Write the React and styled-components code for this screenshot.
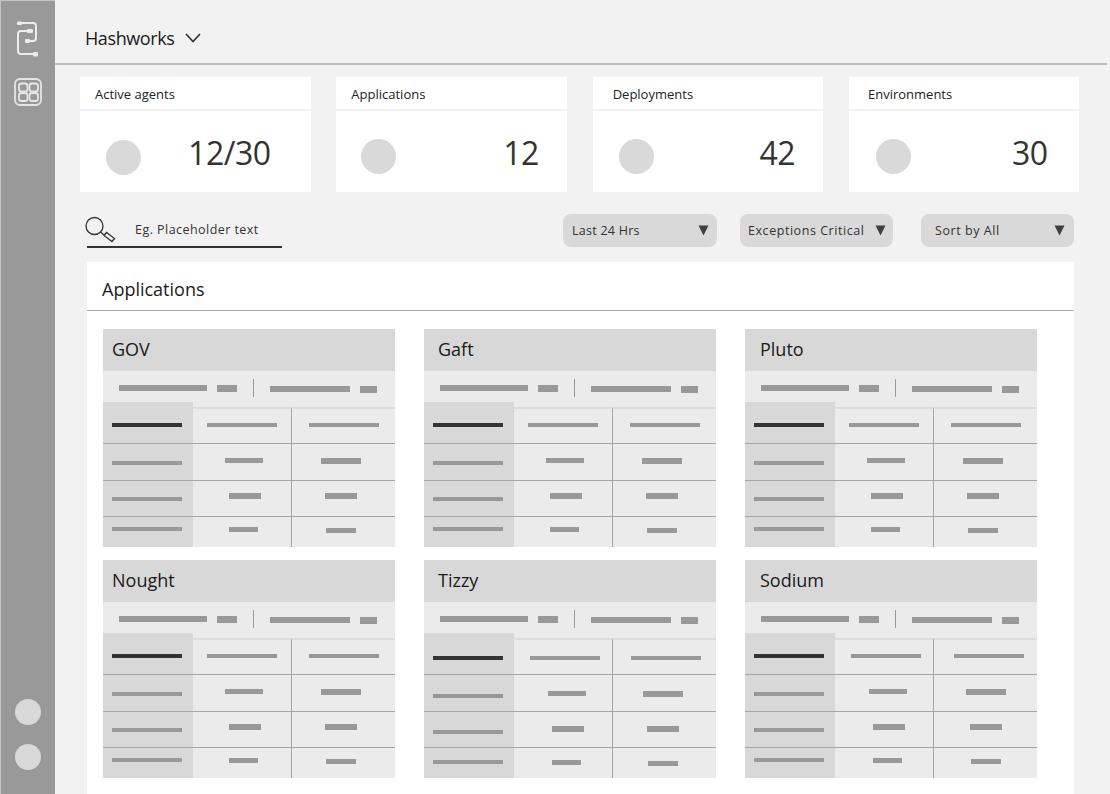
import React from 'react'
import styled, { createGlobalStyle } from 'styled-components'

const GlobalStyle = createGlobalStyle`
  html, body {
    margin: 0;
    height: 794px;
    overflow: hidden;
    background: #f2f2f2;
    font-family: "Open Sans", "Liberation Sans", sans-serif;
  }
  * { box-sizing: border-box; }
`

const Page = styled.div`
  display: flex;
  width: 1110px;
  height: 794px;
  overflow: hidden;
`

const Sidebar = styled.aside`
  width: 55px;
  flex-shrink: 0;
  background: #999;
  border-left: 1px solid #c4c4c4;
  border-top: 1px solid #c4c4c4;
  display: flex;
  flex-direction: column;
  align-items: center;
  padding: 18px 0 24px;
`

const NavIcon = styled.svg`
  display: block;
  margin-bottom: ${({ gap }) => gap || 0}px;
`

const Spacer = styled.div`
  flex: 1;
`

const SideDot = styled.div`
  width: 26px;
  height: 26px;
  border-radius: 50%;
  background: #d9d9d9;
  margin-top: ${({ top }) => top || 0}px;
`

const Main = styled.main`
  flex: 1;
  min-width: 0;
  display: flex;
  flex-direction: column;
`

const Header = styled.header`
  height: 65px;
  width: 1052px;
  flex-shrink: 0;
  border-bottom: 2px solid #bdbdbd;
  display: flex;
  align-items: center;
  gap: 11px;
  padding: 13px 0 0 30px;
  font-size: 18px;
  letter-spacing: -0.4px;
  color: #1a1a1a;
`

const StatRow = styled.section`
  display: flex;
  gap: 25.83px;
  padding: 12px 0 0 25px;
`

const StatCard = styled.div`
  width: 230.5px;
  height: 115px;
  background: #fff;
`

const StatTitle = styled.div`
  height: 34px;
  border-bottom: 2px solid #f2f2f2;
  padding: 1px 0 0 ${({ indent }) => indent}px;
  display: flex;
  align-items: center;
  font-size: 13px;
  color: #222;
`

const StatBody = styled.div`
  height: 81px;
  display: flex;
  align-items: center;
  justify-content: space-between;
  padding: 0 ${({ end }) => end}px 0 ${({ indent }) => indent}px;
`

const StatDot = styled.div`
  width: 35px;
  height: 35px;
  border-radius: 50%;
  background: #d9d9d9;
  margin-top: ${({ drop }) => drop}px;
`

const StatValue = styled.div`
  font-size: 32px;
  letter-spacing: -0.5px;
  line-height: 40px;
  color: #333;
  margin-top: 3px;
`

const FilterRow = styled.section`
  display: flex;
  align-items: flex-start;
  height: 70px;
  padding: 22px 0 0 32px;
`

const SearchBox = styled.div`
  width: 195px;
  height: 34px;
  border-bottom: 2px solid #333;
  display: flex;
  align-items: flex-start;
  gap: 19px;
  margin-right: 281px;
`

const SearchGlyph = styled.svg`
  display: block;
  margin: 2px 0 0 -2px;
`

const SearchText = styled.span`
  font-size: 12.5px;
  letter-spacing: 0.45px;
  line-height: 17px;
  color: #333;
  margin-top: 7px;
`

const Select = styled.div`
  width: ${({ w }) => w}px;
  height: 33px;
  margin-right: ${({ after }) => after}px;
  border-radius: 8px;
  background: #d9d9d9;
  display: flex;
  align-items: center;
  justify-content: space-between;
  padding: 0 ${({ end }) => end}px 0 ${({ indent }) => indent}px;
  font-size: 12.5px;
  letter-spacing: ${({ tight }) => (tight ? 0.25 : 0.55)}px;
  color: #333;
`

const Panel = styled.section`
  width: 987px;
  flex: 1;
  margin-left: 32px;
  background: #fff;
`

const PanelTitle = styled.h2`
  margin: 0;
  height: 49px;
  padding: 5px 0 0 15px;
  display: flex;
  align-items: center;
  border-bottom: 1px solid #aaa;
  font-size: 18px;
  font-weight: 400;
  color: #1a1a1a;
`

const AppGrid = styled.div`
  display: grid;
  grid-template-columns: repeat(3, 292px);
  column-gap: 29px;
  row-gap: 13px;
  padding: 18px 0 0 16px;
`

const AppCard = styled.article`
  width: 292px;
  height: 218px;
  background: #ebebeb;
  display: flex;
  flex-direction: column;
`

const CardTitle = styled.h3`
  margin: 0;
  height: 42px;
  background: #d8d8d8;
  padding: 0 0 2px ${({ indent }) => indent}px;
  display: flex;
  align-items: center;
  font-size: 18px;
  font-weight: 400;
  color: #1a1a1a;
`

const Summary = styled.div`
  height: 36px;
  display: flex;
  align-items: center;
  padding: 0 0 2px 16px;
`

const Bar = styled.div`
  width: ${({ w }) => w}px;
  height: ${({ h }) => h || 6}px;
  background: ${({ dark }) => (dark ? '#333' : '#999')};
  margin-left: ${({ before }) => before || 0}px;
  margin-right: ${({ after }) => after || 0}px;
  margin-top: ${({ down }) => down || 0}px;
`

const SummaryDivider = styled.div`
  width: 1px;
  height: 18px;
  background: #999;
  margin: 0 16px;
`

const Table = styled.div`
  flex: 1;
  display: grid;
  grid-template-columns: 90px 98px 104px;
  grid-template-rows: 36px 37px 36px 31px;
`

const Cell = styled.div`
  display: flex;
  align-items: center;
  justify-content: ${({ first }) => (first ? 'flex-start' : 'center')};
  padding-left: ${({ first }) => (first ? 9 : 0)}px;
  background: ${({ first }) => (first ? '#d8d8d8' : 'transparent')};
  border-top: ${({ top, first }) => (top ? (first ? '0' : '2px solid #dcdcdc') : '1px solid #a6a6a6')};
  border-left: ${({ last }) => (last ? '1px solid #a6a6a6' : '0')};
  margin-top: ${({ top, first }) => (top && first ? -5 : 0)}px;
`

const Chevron = () => (
  <svg width="16" height="10" viewBox="0 0 16 10" fill="none" stroke="#333" strokeWidth="1.7">
    <path d="M1 1l7 7.5L15 1" />
  </svg>
)

const Caret = () => (
  <svg width="11" height="11" viewBox="0 0 11 11">
    <path d="M0.5 0.5h10L5.5 10.5z" fill="#404040" />
  </svg>
)

const Logo = () => (
  <NavIcon gap={21} width="24" height="38" viewBox="0 0 24 38" fill="none" stroke="#ececec" strokeWidth="2">
    <path d="M3 4H17q3 0 3 3V19q0 3-3 3H10" />
    <path d="M14 12H5q-3 0-3 3V32q0 3 3 3H20" />
    <rect x="1" y="2.500" width="5" height="3.500" rx="1" fill="#ececec" stroke="none" />
    <rect x="11" y="10" width="6" height="4" rx="1" fill="#ececec" stroke="none" />
    <rect x="9" y="20" width="5" height="4" rx="1" fill="#ececec" stroke="none" />
    <rect x="17" y="33" width="5" height="4.500" rx="1" fill="#ececec" stroke="none" />
  </NavIcon>
)

const GridIcon = () => (
  <NavIcon width="28" height="28" viewBox="0 0 28 28" fill="none" stroke="#e6e6e6" strokeWidth="1.800">
    <rect x="1" y="1" width="26" height="26" rx="5" />
    <rect x="5" y="5.500" width="8.500" height="8" rx="2.500" />
    <rect x="15.500" y="5.500" width="8.500" height="8" rx="2.500" />
    <rect x="5" y="15" width="8.500" height="8" rx="2.500" />
    <rect x="15.500" y="15" width="8.500" height="8" rx="2.500" />
  </NavIcon>
)

const SearchIcon = () => (
  <SearchGlyph width="31" height="27" viewBox="0 0 31 27" fill="none" stroke="#333" strokeWidth="1.300">
    <circle cx="9.500" cy="10" r="8.500" />
    <path d="M15.500 16l3.500 3" />
    <path d="M19 19.500l2.500-3 8 6-2.500 3z" />
  </SearchGlyph>
)

const stats = [
  { title: 'Active agents', value: '12/30', titleIndent: 15, dotIndent: 26, end: 40, drop: 12 },
  { title: 'Applications', value: '12', titleIndent: 15, dotIndent: 25, end: 28, drop: 10 },
  { title: 'Deployments', value: '42', titleIndent: 20, dotIndent: 26, end: 28, drop: 10 },
  { title: 'Environments', value: '30', titleIndent: 19, dotIndent: 27, end: 32, drop: 10 },
]

const apps = [
  { name: 'GOV', indent: 9 },
  { name: 'Gaft', indent: 14 },
  { name: 'Pluto', indent: 15 },
  { name: 'Nought', indent: 9 },
  { name: 'Tizzy', indent: 14, lift: 4, midShift: 4, rightShift: 2 },
  { name: 'Sodium', indent: 15, midShift: 4, rightShift: 6 },
]

// sizes and small offsets of the bars, one entry per table line below the head
const rows = [
  { leftDown: 2, mid: 38, midH: 5, midDown: -3, midBefore: 3, right: 40, rightH: 6, rightDown: -2, rightAfter: 5 },
  { leftDown: 1, mid: 32, midH: 6, midDown: -5, midBefore: 5, right: 32, rightH: 6, rightDown: -5, rightAfter: 5 },
  { leftDown: -6, mid: 29, midH: 5, midDown: -5, midBefore: 2, right: 30, rightH: 5, rightDown: -3, rightAfter: 5 },
]

const AppTile = ({ name, indent, lift = 0, midShift = 0, rightShift = 0 }) => (
  <AppCard>
    <CardTitle indent={indent}>{name}</CardTitle>
    <Summary>
      <Bar w={88} after={10} />
      <Bar w={20} h={7} />
      <SummaryDivider />
      <Bar w={80} after={10} down={2} />
      <Bar w={17} h={7} down={2} />
    </Summary>
    <Table>
      <Cell first top><Bar w={70} h={4} dark down={5 + lift} /></Cell>
      <Cell top><Bar w={70} h={4} down={-3 + lift} before={midShift} /></Cell>
      <Cell top last><Bar w={70} h={4} down={-3 + lift} before={rightShift} /></Cell>
      {rows.map((row, i) => (
        <React.Fragment key={i}>
          <Cell first><Bar w={70} h={4} down={row.leftDown + lift} /></Cell>
          <Cell><Bar w={row.mid} h={row.midH} down={row.midDown + lift} before={row.midBefore + midShift} /></Cell>
          <Cell last><Bar w={row.right} h={row.rightH} down={row.rightDown + lift} after={row.rightAfter} before={rightShift} /></Cell>
        </React.Fragment>
      ))}
    </Table>
  </AppCard>
)

export default function App() {
  return (
    <Page>
      <GlobalStyle />
      <Sidebar>
        <Logo />
        <GridIcon />
        <Spacer />
        <SideDot />
        <SideDot top={19} />
      </Sidebar>
      <Main>
        <Header>
          <span>Hashworks</span>
          <Chevron />
        </Header>
        <StatRow>
          {stats.map((s) => (
            <StatCard key={s.title}>
              <StatTitle indent={s.titleIndent}>{s.title}</StatTitle>
              <StatBody indent={s.dotIndent} end={s.end}>
                <StatDot drop={s.drop} />
                <StatValue>{s.value}</StatValue>
              </StatBody>
            </StatCard>
          ))}
        </StatRow>
        <FilterRow>
          <SearchBox>
            <SearchIcon />
            <SearchText>Eg. Placeholder text</SearchText>
          </SearchBox>
          <Select w={154} after={23} indent={9} end={8} tight>Last 24 Hrs<Caret /></Select>
          <Select w={153} after={28} indent={8} end={7}>Exceptions Critical<Caret /></Select>
          <Select w={153} after={0} indent={14} end={9}>Sort by All<Caret /></Select>
        </FilterRow>
        <Panel>
          <PanelTitle>Applications</PanelTitle>
          <AppGrid>
            {apps.map((a) => (
              <AppTile key={a.name} {...a} />
            ))}
          </AppGrid>
        </Panel>
      </Main>
    </Page>
  )
}
